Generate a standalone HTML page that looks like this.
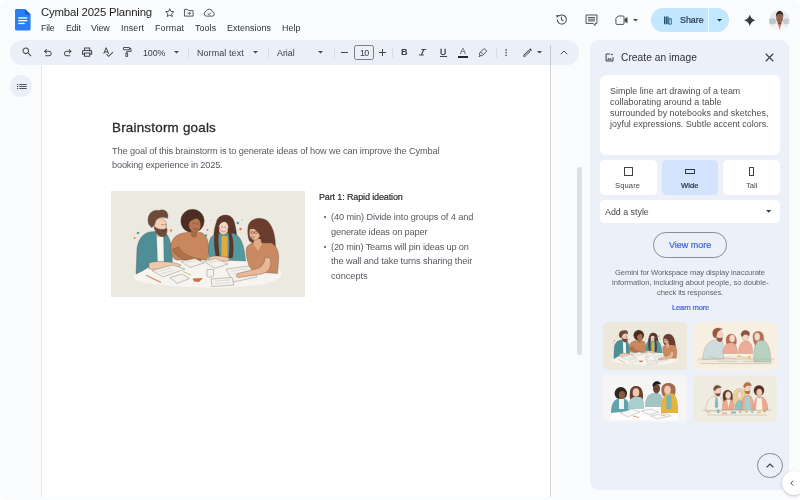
<!DOCTYPE html>
<html lang="en">
<head>
<meta charset="utf-8">
<title>Cymbal 2025 Planning</title>
<style>
*{box-sizing:border-box;margin:0;padding:0}
html,body{width:800px;height:500px;overflow:hidden}
html{background:#fff}
body{border-radius:7px;background:#f9fbfd;font-family:"Liberation Sans",sans-serif;color:#1f1f1f;position:relative}
.abs{position:absolute}
svg{position:absolute;overflow:visible}
.t{position:absolute;white-space:nowrap;line-height:1;will-change:transform}
#toolbar{left:10px;top:40px;width:569px;height:24.6px;border-radius:12.3px;background:#ebeff8}
.sep{position:absolute;width:1px;height:10px;top:47.6px;background:#d9dde5}
#docpage{left:40.5px;top:64.6px;width:510.6px;height:432.4px;background:#fff;border-left:1px solid #e4e6ea;border-right:1px solid #d3d5d9}
#panel{left:590.4px;top:40px;width:198.2px;height:449.5px;border-radius:9px;background:#ecf0f9}
.card{position:absolute;background:#fff;border-radius:6px}
.ic{stroke:#444746;fill:none;stroke-width:1.9;stroke-linecap:butt;stroke-linejoin:miter}
.fi{fill:#444746}
.thumb{position:absolute;width:84.4px;height:47.4px;border-radius:5px;overflow:hidden}
.thumb svg{left:0;top:0}
</style>
</head>
<body>
<!-- docs logo -->
<svg style="left:15px;top:9.3px" width="15.6" height="21.4" viewBox="0 0 15.6 21.4">
  <path d="M1.5 0H10L15.6 5.6V19.9Q15.6 21.4 14.1 21.4H1.5Q0 21.4 0 19.9V1.5Q0 0 1.5 0Z" fill="#2b7ef7"/>
  <path d="M10 0L15.6 5.6H11.2Q10 5.6 10 4.4Z" fill="#1659c7"/>
  <rect x="3.3" y="8.3" width="9" height="1.3" fill="#fff"/>
  <rect x="3.3" y="11" width="9" height="1.3" fill="#fff"/>
  <rect x="3.3" y="13.8" width="6.4" height="1.3" fill="#fff"/>
</svg>
<!-- title icons -->
<svg style="left:163.6px;top:6.7px" width="11.5" height="11.5" viewBox="0 0 24 24"><path class="ic" d="M12 3.6l2.5 5.6 6.1.6-4.6 4.1 1.3 6L12 16.8 6.7 19.9l1.3-6-4.6-4.1 6.1-.6z"/></svg>
<svg style="left:183px;top:6.5px" width="11.5" height="11.5" viewBox="0 0 24 24"><path class="ic" d="M3 5h6.5l2 2.5H21V19H3z"/><path class="ic" d="M9.5 13.2h6M13.2 10.5l2.6 2.7-2.6 2.7" stroke-width="1.7"/></svg>
<svg style="left:202.5px;top:6.5px" width="12.5" height="11.5" viewBox="0 0 26 24"><path class="ic" d="M7 19a5 5 0 0 1-.6-9.9A7 7 0 0 1 19.8 10 4.6 4.6 0 0 1 20 19z"/><path class="ic" d="M9.6 13.6l2.6 2.6 4.4-4.6" stroke-width="1.7"/></svg>

<!-- header right icons -->
<svg style="left:555.1px;top:13.3px" width="13" height="13" viewBox="0 0 24 24"><path class="ic" d="M4.2 12a8.4 8.4 0 1 0 2.6-6" stroke-width="2"/><path class="fi" d="M2.2 3.6l5.8.6-4.6 5z"/><path class="ic" d="M12 7v5.4l3.8 2.6" stroke-width="2"/></svg>
<svg style="left:585.4px;top:13.6px" width="13" height="12.4" viewBox="0 0 26 25"><path class="ic" d="M2 2h22v17h-3.6v4.2L16 19H2z" stroke-width="2.1"/><path class="ic" d="M6 7h14M6 10.5h14M6 14h14" stroke-width="1.6"/></svg>
<svg style="left:614.6px;top:14.8px" width="13.6" height="10.4" viewBox="0 0 27 21"><path class="ic" d="M6 2h10a2 2 0 0 1 2 2v13a2 2 0 0 1-2 2H3.600a2 2 0 0 1-2-2V6.500z" stroke-width="2.1"/><path class="fi" d="M19 8.200l6-4.200v13l-6-4.200z"/></svg>
<svg style="left:633.2px;top:18.6px" width="5" height="2.6" viewBox="0 0 10 5"><path class="fi" d="M0 0h10L5 5z"/></svg>
<!-- share button -->
<div class="abs" style="left:651.4px;top:7.5px;width:78px;height:24.4px;border-radius:12.2px;background:#c2e7ff"></div>
<div class="abs" style="left:708.4px;top:7.5px;width:1px;height:24.4px;background:#e6f4ff"></div>
<svg style="left:662.8px;top:15.6px" width="9.6" height="8.6" viewBox="0 0 20 21"><path d="M1 1h2.600v19H1zM5 1h2.600v19H5zM9 1h2.600v19H9z" fill="#0b3a5c"/><path d="M13 6.500h5.600V20H13z" fill="none" stroke="#0b3a5c" stroke-width="1.700"/></svg>
<svg style="left:716.6px;top:18.6px" width="5" height="2.6" viewBox="0 0 10 5"><path d="M0 0h10L5 5z" fill="#0b3a5c"/></svg>
<!-- gemini spark -->
<svg style="left:743.7px;top:13.5px" width="11.6" height="12.6" viewBox="0 0 24 24"><path d="M12 0Q14.600 9.400 24 12 14.600 14.600 12 24 9.400 14.600 0 12 9.400 9.400 12 0z" fill="#3a3c40"/></svg>
<!-- avatar -->
<svg style="left:769px;top:10px" width="20.4" height="20.4" viewBox="0 0 40 40">
  <defs><clipPath id="av"><circle cx="20" cy="20" r="20"/></clipPath></defs>
  <g clip-path="url(#av)">
    <rect width="40" height="40" fill="#e7eaec"/>
    <ellipse cx="6" cy="22" rx="8" ry="6" fill="#bcc5c8"/>
    <ellipse cx="34" cy="22" rx="7" ry="6" fill="#c6cdd0"/>
    <path d="M4 40C6 31 12 28 20.500 27.500s14 3.500 16 12.500z" fill="#f6f5f3"/>
    <path d="M17.500 26l3.300 13 3.300-13z" fill="#dd6f55"/>
    <rect x="17.300" y="20" width="7" height="8" fill="#7d4a34"/>
    <ellipse cx="20.800" cy="15.500" rx="6.600" ry="9" fill="#93604a"/>
    <path d="M13.600 14C13 5 18 1.800 21 1.800s8 3 7 12.200C26.500 8.500 24 7.500 20.800 7.500s-5.400 1.500-7.200 6.500z" fill="#2a1c18"/>
  </g>
</svg>

<!-- toolbar -->
<div class="abs" id="toolbar"></div>
<div class="sep" style="left:188px"></div>
<div class="sep" style="left:268px"></div>
<div class="sep" style="left:334.4px"></div>
<div class="sep" style="left:392.2px"></div>
<div class="sep" style="left:495.6px"></div>
<!-- search -->
<svg style="left:21.3px;top:46.3px" width="12.2" height="12.2" viewBox="0 0 24 24"><path class="fi" d="M15.500 14h-.79l-.28-.27C15.410 12.590 16 11.110 16 9.500 16 5.910 13.090 3 9.500 3S3 5.910 3 9.500 5.910 16 9.500 16c1.610 0 3.090-.59 4.230-1.570l.27.280v.79l5 4.990L20.490 19l-4.990-5zm-6 0C7.010 14 5 11.990 5 9.500S7.010 5 9.500 5 14 7.010 14 9.500 11.990 14 9.500 14z"/></svg>
<!-- undo -->
<svg style="left:41.8px;top:46.9px" width="11.6" height="11.6" viewBox="0 0 24 24"><path class="fi" d="M7 19v-2h7.100q1.575 0 2.738-1T18 13.500q0-1.500-1.162-2.500T14.100 10H7.800l2.600 2.600L9 14 4 9l5-5 1.400 1.400L7.800 8h6.300q2.425 0 4.163 1.575T20 13.500q0 2.350-1.737 3.925T14.100 19z"/></svg>
<!-- redo -->
<svg style="left:61.8px;top:46.9px" width="11.6" height="11.6" viewBox="0 0 24 24"><path class="fi" d="M9.900 19q-2.425 0-4.163-1.575T4 13.500q0-2.350 1.737-3.925T9.900 8h6.300l-2.600-2.600L15 4l5 5-5 5-1.400-1.400 2.600-2.600H9.900q-1.575 0-2.738 1T6 13.500Q6 15 7.162 16T9.900 17H17v2z"/></svg>
<!-- print -->
<svg style="left:81.4px;top:46.3px" width="12.2" height="12.2" viewBox="0 0 24 24"><path class="fi" d="M19 8h-1V3H6v5H5c-1.660 0-3 1.340-3 3v6h4v4h12v-4h4v-6c0-1.660-1.340-3-3-3zM8 5h8v3H8V5zm8 14H8v-4h8v4zm4-4h-2v-2H6v2H4v-4c0-.55.45-1 1-1h14c.55 0 1 .45 1 1v4z"/><circle class="fi" cx="18" cy="11.500" r="1"/></svg>
<!-- spellcheck -->
<svg style="left:101.6px;top:46.2px" width="11.8" height="11.8" viewBox="0 0 24 24"><path class="fi" d="M12.450 16h2.090L9.430 3H7.570L2.460 16h2.090l1.120-3h5.640l1.140 3zm-6.020-5L8.500 5.480 10.570 11H6.430zm15.160.59l-8.090 8.090L9.830 16l-1.410 1.410 5.090 5.090L23 13l-1.410-1.410z"/></svg>
<!-- paint format -->
<svg style="left:121.2px;top:46.1px" width="12" height="12" viewBox="0 0 24 24"><path class="ic" d="M5 3h12v4.500H5z" stroke-width="1.900"/><path class="ic" d="M17 5.200h3v5.600h-8.500v3" stroke-width="1.900"/><path class="ic" d="M9.800 14h3.400v7H9.800z" stroke-width="1.900"/></svg>
<!-- dropdown arrows -->
<svg style="left:174.300px;top:51.1px" width="5" height="2.600" viewBox="0 0 10 5"><path class="fi" d="M0 0h10L5 5z"/></svg>
<svg style="left:252.500px;top:51.1px" width="5" height="2.600" viewBox="0 0 10 5"><path class="fi" d="M0 0h10L5 5z"/></svg>
<svg style="left:318.300px;top:51.1px" width="5" height="2.600" viewBox="0 0 10 5"><path class="fi" d="M0 0h10L5 5z"/></svg>
<svg style="left:537.300px;top:51.1px" width="5" height="2.600" viewBox="0 0 10 5"><path class="fi" d="M0 0h10L5 5z"/></svg>
<!-- minus / size / plus -->
<div class="abs" style="left:341px;top:52.100px;width:7.400px;height:1.100px;background:#444746"></div>
<div class="abs" style="left:353.600px;top:45.400px;width:20px;height:14.200px;border:.8px solid #7a7d83;border-radius:2.500px"></div>
<div class="abs" style="left:378.700px;top:52.100px;width:7.400px;height:1.100px;background:#444746"></div>
<div class="abs" style="left:381.850px;top:48.950px;width:1.100px;height:7.400px;background:#444746"></div>
<!-- B I U A -->
<div class="t" style="left:401.200px;top:47.900px;font-size:9.200px;font-weight:700;color:#3c4043">B</div>
<svg style="left:419.400px;top:49.200px" width="7.200" height="6.600" viewBox="0 0 12 11"><path d="M4 0h8v1.800H8.800L5.400 9.200H8V11H0V9.200h3.200L6.600 1.800H4z" fill="#444746"/></svg>
<div class="t" style="left:440px;top:48px;font-size:8.600px;font-weight:400;color:#3c4043;-webkit-text-stroke:.3px #3c4043">U</div>
<div class="abs" style="left:439.700px;top:56.300px;width:7px;height:1px;background:#444746"></div>
<div class="t" style="left:460.100px;top:47.300px;font-size:8.600px;color:#3c4043">A</div>
<div class="abs" style="left:458.200px;top:56.300px;width:9.800px;height:1.700px;background:#26282b"></div>
<!-- highlighter pen -->
<svg style="left:477.400px;top:46.700px" width="11.250" height="11.250" viewBox="0 0 24 24"><path class="ic" d="M15.200 3.200l5.600 5.600-9.600 9.600H5.600v-5.600z" stroke-width="2" transform="rotate(0)"/><path class="ic" d="M8.200 10.800l5 5" stroke-width="1.600"/><path class="fi" d="M3 21.500l2-2.600 2.600 2.600z"/></svg>
<!-- more vert -->
<svg style="left:504.900px;top:48.700px" width="2.200" height="7.200" viewBox="0 0 4 13"><circle class="fi" cx="2" cy="1.600" r="1.500"/><circle class="fi" cx="2" cy="6.500" r="1.500"/><circle class="fi" cx="2" cy="11.400" r="1.500"/></svg>
<!-- pencil -->
<svg style="left:521.500px;top:46.700px" width="11.250" height="11.250" viewBox="0 0 24 24"><path class="fi" d="M3 17.250V21h3.750L17.810 9.940l-3.750-3.750L3 17.250zM20.710 7.040a.996.996 0 0 0 0-1.410l-2.340-2.340a.996.996 0 0 0-1.410 0l-1.830 1.830 3.750 3.750 1.830-1.830z"/><path d="M5.200 17.900l9-9 1.400 1.400-9 9H5.200z" fill="#ebeff8"/></svg>
<!-- collapse chevron -->
<svg style="left:560.200px;top:50.300px" width="8" height="5" viewBox="0 0 16 10"><path d="M1.500 8.500L8 2l6.500 6.500" fill="none" stroke="#444746" stroke-width="1.900"/></svg>


<!-- left rail outline button -->
<div class="abs" style="left:10.4px;top:75.2px;width:21.8px;height:21.8px;border-radius:50%;background:#ebeff7"></div>
<svg style="left:16.500px;top:84px" width="10" height="5" viewBox="0 0 10 5"><path d="M0 0h1.200v1H0zM2.300 0H9.700v1H2.300zM0 2h1.200v1H0zM2.300 2H9.700v1H2.300zM0 4h1.200v1H0zM2.300 4H9.700v1H2.300z" fill="#50545a"/></svg>

<!-- page -->
<div class="abs" id="docpage"></div>
<div class="abs" style="left:550.1px;top:45.4px;width:1px;height:20px;background:#c6c9ce"></div>
<div class="abs" style="left:577.2px;top:166.5px;width:4.6px;height:188.5px;border-radius:2.3px;background:#dcdee2"></div>
<!-- doc image -->
<div class="abs" style="left:111px;top:191px;width:194px;height:106px;background:#ece9e0;overflow:hidden">
<svg style="left:0;top:0" width="194" height="106" viewBox="0 0 194 106"><g>
<!-- accent dots -->
<circle cx="27" cy="42" r="1.300" fill="#4f9ea3"/><circle cx="23.700" cy="47" r="1" fill="#e08a4f"/><circle cx="60" cy="39.500" r="1.200" fill="#e08a4f"/><circle cx="95" cy="44.500" r="1.200" fill="#4f9ea3"/><circle cx="126.800" cy="32" r="1.300" fill="#4f9ea3"/><circle cx="129.500" cy="38" r="1.200" fill="#e0694f"/><circle cx="96.500" cy="39" r="1" fill="#e08a4f"/><circle cx="123.500" cy="36.500" r="1" fill="#4f9ea3"/><circle cx="30" cy="51" r=".8" fill="#e08a4f"/><circle cx="92" cy="31" r=".7" fill="#e9b9a0"/><circle cx="100" cy="29" r=".7" fill="#e9b9a0"/><circle cx="131" cy="29" r=".7" fill="#8fc3c6"/>
<!-- table -->
<path d="M22 86C28 75 52 68 97 68s64 5 73 13c3 4-4 9-17 12-20 4-60 5-90 2-22-2-38-3-41-9z" fill="#f6f4ee"/>
<g stroke="#5e4a40" stroke-width=".35" stroke-linejoin="round">
<!-- man -->
<path d="M37 41.500C30 44 27 50 26 58L25 83C30 81 36 77 41 74L61 73C62 64 61 52 56.500 44 52 41 44 39.500 37 41.500z" fill="#4e8f97"/>
<path d="M45.500 43L52.500 45.500 53 71 46.500 71z" fill="#f6f4ef" stroke-width=".2"/>
<path d="M38 72C46 69.500 57 70.500 66 72.500L70 74 66.500 77C58 77.500 46 79 38 78z" fill="#f0c8ad"/>
<path d="M46 40h6v6h-6z" fill="#e9bda0" stroke="none"/>
<ellipse cx="49.500" cy="34.500" rx="6" ry="7.500" fill="#f3cfb6"/>
<path d="M37.500 33C35 23 42 18 48 19.500 54 17 58.500 22 56.500 27.500 52 25 46.500 26 44.500 30 43.500 34 42.500 36 40.500 36.500z" fill="#6e4a3a"/>
<path d="M43 35.500C44 42 48 46.500 53 45.500 56 44.500 56.500 40 55.800 37 52 39.500 47 38.500 43 35.500z" fill="#704a38"/>
<!-- woman 2 -->
<circle cx="81.500" cy="30" r="11.700" fill="#4b2d22"/>
<path d="M60 53C62 45 69 41.500 77 41.500L90 41.500C96 43.500 98.500 52 97.500 62L96 69 65 69C60 65 59 59 60 53z" fill="#c9875e"/>
<path d="M80 40h6v5l-3 2-3-2z" fill="#a86a45" stroke="none"/>
<ellipse cx="83.800" cy="34" rx="6" ry="7.200" fill="#b7754f"/>
<path d="M75 30C76 24 84 22 90 27 86 27 80 28 77 33z" fill="#4b2d22" stroke="none"/>
<path d="M61.500 58C63 66 76 70.500 88 72.500L90 68.500C80 66.500 70 62.500 68 56z" fill="#b27049"/>
<!-- woman 3 -->
<path d="M105.500 31C107 22.500 120 21.500 123 30 126 40 127.500 55 124.500 65L104 65C101.500 52 102.500 38 105.500 31z" fill="#5b342a"/>
<path d="M99.500 47C103 42.500 108 41.500 112 42L120 42C128 42.500 133 50 134.500 70L98 68.500C97 60 97.500 52 99.500 47z" fill="#529aa0"/>
<path d="M110.500 45L116.500 45 116.500 67 110.500 67z" fill="#e3ab3e" stroke="none"/>
<ellipse cx="112.500" cy="37" rx="5" ry="6.700" fill="#f5d6c1"/>
<path d="M104.500 36C102 48 103 60 105.500 67L109 67C107 56 107 46 108.500 36z" fill="#5b342a" stroke="none"/>
<path d="M118.500 36C122.500 46 123.500 58 121.500 67L117.500 67C119 56 118.500 46 116.500 38z" fill="#5b342a" stroke="none"/>
<path d="M106 34C107 27 116 26 119.500 32 115 30 110 30 108 35z" fill="#5b342a" stroke="none"/>
<path d="M98 66C104 64 112 65 118 67L118 70 98 70z" fill="#f0c8ad"/>
<!-- woman 4 -->
<path d="M137 36C138 27 150 25 156.500 30 162.500 36 164.500 46 164.500 56L150 57 138.500 50C136.500 46 136.500 40 137 36z" fill="#6b3d2f"/>
<path d="M135.500 57C137.500 52.500 144 50.500 150 52L160 52C166 54 168.500 62 167.500 70L166.500 82.500 140.500 80.500C136 72 134.500 62 135.500 57z" fill="#c98a62"/>
<path d="M143 48L149.500 48 151 53 147 60 142.500 53z" fill="#e3aa86" stroke="none"/>
<ellipse cx="143.800" cy="42" rx="5.600" ry="7.200" fill="#eab794"/>
<path d="M138 38C139 31 149 29 153 35 155 41 154 47 151 52 150 45 147 40 143 38z" fill="#6b3d2f" stroke="none"/>
</g>
<!-- face details -->
<g fill="none" stroke="#4a352c" stroke-width=".45" stroke-linecap="round">
<path d="M51 33.500h1.200M54 33.800h1M50.500 39.500c1.500 1 3 1 4 .2"/>
<path d="M82 32.500c.6-.5 1.300-.5 1.800 0M86 33c.5-.4 1-.4 1.500 0M82.500 37.500c1.500 1.200 3.200 1.200 4.300 0"/>
<path d="M110.500 36c.5-.5 1-.5 1.500 0M113.500 36.300c.5-.4 1-.4 1.400 0M110.500 40c1.200 1.300 3 1.300 4 0"/>
<path d="M140 41.500a1.300 1.300 0 1 0 2.600 0a1.300 1.300 0 1 0-2.600 0M143.500 41.500a1.300 1.300 0 1 0 2.600 0a1.300 1.300 0 1 0-2.600 0M140.500 46c1 .9 2.300.9 3.200 0"/>
</g>
<circle cx="141.500" cy="44.500" r=".9" fill="#e58a70" opacity=".7"/><circle cx="110" cy="39" r=".9" fill="#ee9a84" opacity=".7"/>
<!-- notebooks, papers -->
<g fill="#f3f1ea" stroke="#85827b" stroke-width=".45" stroke-linejoin="round">
<path d="M41 79.500L62 74 74 78 52 86z"/>
<path d="M59 86.500L71 83 78.500 87.500 66 92.500z"/>
<path d="M70 70.500L84 67.500 93 72 79 76.500z"/>
<path d="M93 70.500L105 67.500 117 73 104 77.500z"/>
<path d="M115 78L138 75 146 86 122 91z"/>
<path d="M100 88L121 86.500 123 94 101 95.500z"/>
<path d="M96 78.500h6.500v5.500a2 2 0 0 1-2 2h-2.500a2 2 0 0 1-2-2z"/>
</g>
<g fill="none" stroke="#a9a59b" stroke-width=".3"><path d="M47 80.500l14-3.500M50 82.500l14-3.500M120 80l17-2.300M122 83l17-2.300M104 90l15-1M104 92.500l15-1M98 71.500l10-2M75 71.500l10-2"/></g>
<path d="M35 84.200L50 91.500" stroke="#d9835a" stroke-width="1.100"/>
<path d="M81.500 87.500L92 87 88 91 83 90.500z" fill="#c9714a"/>
<path d="M72 80.500l8 3.500" stroke="#c9a06a" stroke-width=".7"/>
<!-- woman 4 arm over notebook -->
<path d="M159 67C161.500 75 158 81 151 83L128 86.500C125 87 124.500 83.500 127 82.500L148 77C152 75 154 70.500 154 66z" fill="#eab794" stroke="#5e4a40" stroke-width=".35"/>
</g>
</svg>
</div>
<!-- bullets -->
<div class="abs" style="left:323.8px;top:216.4px;width:1.8px;height:1.8px;border-radius:50%;background:#50535a"></div>
<div class="abs" style="left:323.8px;top:245.8px;width:1.8px;height:1.8px;border-radius:50%;background:#50535a"></div>

<!-- panel -->
<div class="abs" id="panel"></div>
<svg style="left:605px;top:53.2px" width="9" height="9" viewBox="0 0 18 18"><path d="M10 2H2.200v14H16V8" fill="none" stroke="#3c4043" stroke-width="2"/><path d="M4 13.500l3-4 2.200 2.600 1.800-2 3 3.400z" fill="#444746"/><path d="M14 0c.2 2 1 2.800 3 3-2 .2-2.800 1-3 3-.2-2-1-2.800-3-3 2-.2 2.800-1 3-3z" fill="#444746"/></svg>
<svg style="left:765.4px;top:53px" width="9" height="9" viewBox="0 0 18 18"><path d="M1.500 1.500l15 15M16.500 1.500l-15 15" stroke="#3c4043" stroke-width="2.300" fill="none"/></svg>
<div class="card" style="left:599.8px;top:75px;width:180px;height:80px"></div>
<div class="card" style="left:599.8px;top:160.2px;width:57.2px;height:34.7px;border-radius:4.500px"></div>
<div class="card" style="left:661.6px;top:160.2px;width:56.6px;height:34.7px;border-radius:4.500px;background:#d3e3fd"></div>
<div class="card" style="left:722.8px;top:160.2px;width:57px;height:34.7px;border-radius:4.500px"></div>
<div class="abs" style="left:623.6px;top:166.800px;width:9.6px;height:9.400px;border:1.100px solid #3c4043;border-radius:.6px"></div>
<div class="abs" style="left:685.2px;top:168.800px;width:9.6px;height:5.600px;border:1.100px solid #2a3550;border-radius:.6px"></div>
<div class="abs" style="left:748.9px;top:166.800px;width:5.600px;height:9.400px;border:1.100px solid #3c4043;border-radius:.6px"></div>
<div class="card" style="left:599.8px;top:200.3px;width:180px;height:22.4px;border-radius:4.500px"></div>
<svg style="left:765.6px;top:210.3px" width="5.400" height="2.800" viewBox="0 0 10 5"><path d="M0 0h10L5 5z" fill="#3c4043"/></svg>
<div class="abs" style="left:653px;top:232px;width:74px;height:25.600px;border-radius:12.800px;border:1px solid #8b8e95"></div>
<!-- thumbs -->
<div class="thumb" style="left:602.8px;top:322.2px;background:#ece8dc"><svg width="84.400" height="47.400" viewBox="1 0 190 107"><g>
<!-- accent dots -->
<circle cx="27" cy="42" r="1.300" fill="#4f9ea3"/><circle cx="23.700" cy="47" r="1" fill="#e08a4f"/><circle cx="60" cy="39.500" r="1.200" fill="#e08a4f"/><circle cx="95" cy="44.500" r="1.200" fill="#4f9ea3"/><circle cx="126.800" cy="32" r="1.300" fill="#4f9ea3"/><circle cx="129.500" cy="38" r="1.200" fill="#e0694f"/><circle cx="96.500" cy="39" r="1" fill="#e08a4f"/><circle cx="123.500" cy="36.500" r="1" fill="#4f9ea3"/><circle cx="30" cy="51" r=".8" fill="#e08a4f"/><circle cx="92" cy="31" r=".7" fill="#e9b9a0"/><circle cx="100" cy="29" r=".7" fill="#e9b9a0"/><circle cx="131" cy="29" r=".7" fill="#8fc3c6"/>
<!-- table -->
<path d="M22 86C28 75 52 68 97 68s64 5 73 13c3 4-4 9-17 12-20 4-60 5-90 2-22-2-38-3-41-9z" fill="#f6f4ee"/>
<g stroke="#5e4a40" stroke-width=".35" stroke-linejoin="round">
<!-- man -->
<path d="M37 41.500C30 44 27 50 26 58L25 83C30 81 36 77 41 74L61 73C62 64 61 52 56.500 44 52 41 44 39.500 37 41.500z" fill="#4e8f97"/>
<path d="M45.500 43L52.500 45.500 53 71 46.500 71z" fill="#f6f4ef" stroke-width=".2"/>
<path d="M38 72C46 69.500 57 70.500 66 72.500L70 74 66.500 77C58 77.500 46 79 38 78z" fill="#f0c8ad"/>
<path d="M46 40h6v6h-6z" fill="#e9bda0" stroke="none"/>
<ellipse cx="49.500" cy="34.500" rx="6" ry="7.500" fill="#f3cfb6"/>
<path d="M37.500 33C35 23 42 18 48 19.500 54 17 58.500 22 56.500 27.500 52 25 46.500 26 44.500 30 43.500 34 42.500 36 40.500 36.500z" fill="#6e4a3a"/>
<path d="M43 35.500C44 42 48 46.500 53 45.500 56 44.500 56.500 40 55.800 37 52 39.500 47 38.500 43 35.500z" fill="#704a38"/>
<!-- woman 2 -->
<circle cx="81.500" cy="30" r="11.700" fill="#4b2d22"/>
<path d="M60 53C62 45 69 41.500 77 41.500L90 41.500C96 43.500 98.500 52 97.500 62L96 69 65 69C60 65 59 59 60 53z" fill="#c9875e"/>
<path d="M80 40h6v5l-3 2-3-2z" fill="#a86a45" stroke="none"/>
<ellipse cx="83.800" cy="34" rx="6" ry="7.200" fill="#b7754f"/>
<path d="M75 30C76 24 84 22 90 27 86 27 80 28 77 33z" fill="#4b2d22" stroke="none"/>
<path d="M61.500 58C63 66 76 70.500 88 72.500L90 68.500C80 66.500 70 62.500 68 56z" fill="#b27049"/>
<!-- woman 3 -->
<path d="M105.500 31C107 22.500 120 21.500 123 30 126 40 127.500 55 124.500 65L104 65C101.500 52 102.500 38 105.500 31z" fill="#5b342a"/>
<path d="M99.500 47C103 42.500 108 41.500 112 42L120 42C128 42.500 133 50 134.500 70L98 68.500C97 60 97.500 52 99.500 47z" fill="#529aa0"/>
<path d="M110.500 45L116.500 45 116.500 67 110.500 67z" fill="#e3ab3e" stroke="none"/>
<ellipse cx="112.500" cy="37" rx="5" ry="6.700" fill="#f5d6c1"/>
<path d="M104.500 36C102 48 103 60 105.500 67L109 67C107 56 107 46 108.500 36z" fill="#5b342a" stroke="none"/>
<path d="M118.500 36C122.500 46 123.500 58 121.500 67L117.500 67C119 56 118.500 46 116.500 38z" fill="#5b342a" stroke="none"/>
<path d="M106 34C107 27 116 26 119.500 32 115 30 110 30 108 35z" fill="#5b342a" stroke="none"/>
<path d="M98 66C104 64 112 65 118 67L118 70 98 70z" fill="#f0c8ad"/>
<!-- woman 4 -->
<path d="M137 36C138 27 150 25 156.500 30 162.500 36 164.500 46 164.500 56L150 57 138.500 50C136.500 46 136.500 40 137 36z" fill="#6b3d2f"/>
<path d="M135.500 57C137.500 52.500 144 50.500 150 52L160 52C166 54 168.500 62 167.500 70L166.500 82.500 140.500 80.500C136 72 134.500 62 135.500 57z" fill="#c98a62"/>
<path d="M143 48L149.500 48 151 53 147 60 142.500 53z" fill="#e3aa86" stroke="none"/>
<ellipse cx="143.800" cy="42" rx="5.600" ry="7.200" fill="#eab794"/>
<path d="M138 38C139 31 149 29 153 35 155 41 154 47 151 52 150 45 147 40 143 38z" fill="#6b3d2f" stroke="none"/>
</g>
<!-- face details -->
<g fill="none" stroke="#4a352c" stroke-width=".45" stroke-linecap="round">
<path d="M51 33.500h1.200M54 33.800h1M50.500 39.500c1.500 1 3 1 4 .2"/>
<path d="M82 32.500c.6-.5 1.300-.5 1.800 0M86 33c.5-.4 1-.4 1.500 0M82.500 37.500c1.500 1.200 3.200 1.200 4.300 0"/>
<path d="M110.500 36c.5-.5 1-.5 1.500 0M113.500 36.300c.5-.4 1-.4 1.400 0M110.500 40c1.200 1.300 3 1.300 4 0"/>
<path d="M140 41.500a1.300 1.300 0 1 0 2.600 0a1.300 1.300 0 1 0-2.600 0M143.500 41.500a1.300 1.300 0 1 0 2.600 0a1.300 1.300 0 1 0-2.600 0M140.500 46c1 .9 2.300.9 3.200 0"/>
</g>
<circle cx="141.500" cy="44.500" r=".9" fill="#e58a70" opacity=".7"/><circle cx="110" cy="39" r=".9" fill="#ee9a84" opacity=".7"/>
<!-- notebooks, papers -->
<g fill="#f3f1ea" stroke="#85827b" stroke-width=".45" stroke-linejoin="round">
<path d="M41 79.500L62 74 74 78 52 86z"/>
<path d="M59 86.500L71 83 78.500 87.500 66 92.500z"/>
<path d="M70 70.500L84 67.500 93 72 79 76.500z"/>
<path d="M93 70.500L105 67.500 117 73 104 77.500z"/>
<path d="M115 78L138 75 146 86 122 91z"/>
<path d="M100 88L121 86.500 123 94 101 95.500z"/>
<path d="M96 78.500h6.500v5.500a2 2 0 0 1-2 2h-2.500a2 2 0 0 1-2-2z"/>
</g>
<g fill="none" stroke="#a9a59b" stroke-width=".3"><path d="M47 80.500l14-3.500M50 82.500l14-3.500M120 80l17-2.300M122 83l17-2.300M104 90l15-1M104 92.500l15-1M98 71.500l10-2M75 71.500l10-2"/></g>
<path d="M35 84.200L50 91.500" stroke="#d9835a" stroke-width="1.100"/>
<path d="M81.500 87.500L92 87 88 91 83 90.500z" fill="#c9714a"/>
<path d="M72 80.500l8 3.500" stroke="#c9a06a" stroke-width=".7"/>
<!-- woman 4 arm over notebook -->
<path d="M159 67C161.500 75 158 81 151 83L128 86.500C125 87 124.500 83.500 127 82.500L148 77C152 75 154 70.500 154 66z" fill="#eab794" stroke="#5e4a40" stroke-width=".35"/>
</g>
</svg></div>
<div class="thumb" style="left:693px;top:322.2px;background:#f7efe1"><svg width="84.400" height="47.400" viewBox="0 0 84.400 47.400"><g>
<path d="M4 36.500C20 33.500 64 33.500 82 36.500L80 42.500 6 42.500z" fill="#f0e8da"/>
<g stroke="#9a8476" stroke-width=".3" stroke-linejoin="round">
<!-- man -->
<path d="M9.800 37.500C10 26.500 14 19.500 22 18L30 20 30.500 37z" fill="#cfdcde"/>
<ellipse cx="26.300" cy="13.800" rx="3.500" ry="5.200" fill="#f3d3be"/>
<path d="M19.800 13C18.500 6.500 24 4.500 29.500 7 27 8 24.300 9 23.800 13 23.300 16 21.500 16.500 20.500 15z" fill="#9a563a"/>
<path d="M23 14.500C23.500 19 26 20.500 28.500 19.500 29.500 18 29.500 16.500 29.200 15.500 27 16.500 24.500 16.300 23 14.500z" fill="#9a563a"/>
<!-- woman 2 -->
<path d="M33.300 16C34.500 10.500 42 10.500 43.200 16.500 43.800 19.500 43.500 21 43 22.500L33.800 22.500C33 20.500 32.800 18 33.300 16z" fill="#b86a4e"/>
<path d="M30 31.500C30.300 25 32.500 21.500 36 21L40 21C43 22 44.500 26 44.500 31.500z" fill="#eeab97"/>
<ellipse cx="39.200" cy="16.500" rx="2.900" ry="3.800" fill="#f6d8c6"/>
<!-- person 3 -->
<path d="M45.500 31.500C45.500 24 48 19.800 51.500 19.300L55 19.300C58 20.300 59.800 24.500 59.800 31.500z" fill="#eeab97"/>
<ellipse cx="52.300" cy="14.800" rx="3.100" ry="4" fill="#f6d8c6"/>
<path d="M48 13.500C47.500 8 54 6.800 56.500 10.500 56.800 12 56.500 13.300 56 14.300 54.500 12 51.500 11.300 49 15z" fill="#8a5440"/>
<!-- woman 4 -->
<path d="M60 13C61.500 8 69 8 70.500 13.500 71.300 18 70.800 22 69.800 25L62.500 24C60.500 20.500 59.500 16.500 60 13z" fill="#b86e50"/>
<path d="M61 40C60 28.500 62 20.500 66 18.500L71 18.500C75.500 21 77.800 28.500 77.800 40z" fill="#b7d2c2"/>
<ellipse cx="64.200" cy="14.700" rx="2.900" ry="4" fill="#f6d8c6"/>
</g>
<!-- table items -->
<g fill="none" stroke="#b5a791" stroke-width=".4"><path d="M5 37h76M8 41.500h70M16 34.500l10 2.500M30 35.500l14 1.500M46 34.500l12 2.500M24 39l20 .5M50 39.500l16-.5"/></g>
<rect x="44" y="33.500" width="3.400" height="1.600" fill="#efbf55"/><rect x="55" y="34" width="3" height="1.600" fill="#efbf55"/>
</g>
</svg></div>
<div class="thumb" style="left:602.8px;top:374.8px;background:#f5f5f5"><svg width="84.400" height="47.400" viewBox="0 0 84.400 47.400"><g>
<path d="M6 37C20 31 60 30 76 35L74 45 8 45z" fill="#fdfdfd"/>
<!-- woman 1 -->
<circle cx="17.800" cy="18.300" r="6.200" fill="#2e2422"/>
<path d="M8 38C8 29 11 24 16 23.500L21 23.500C25 24.500 26.500 29 26.500 36z" fill="#5fa3ad"/>
<path d="M16 24h5v10h-5z" fill="#f4f2ee"/>
<ellipse cx="19" cy="20" rx="3.200" ry="4" fill="#8a5a40"/>
<!-- woman 2 -->
<path d="M27 17C27.500 9.500 38 9 39.500 16.500 40.500 21 40 24 39 26L28 26C26.500 23 26.500 20 27 17z" fill="#6a4030"/>
<path d="M25 34C25 26 28 22.500 31.500 22L37 22C40 23 41.500 27 41 34z" fill="#a7d0cf"/>
<ellipse cx="33" cy="17.500" rx="3.300" ry="4.300" fill="#f0c8b0"/>
<!-- man 3 -->
<path d="M42 32C42 23 45 18.500 50 18L55 18C59 19 60.500 24 60.500 32z" fill="#a4c4c4"/>
<ellipse cx="53.500" cy="13.500" rx="3.500" ry="5" fill="#6b4632"/>
<path d="M49.500 11C49.500 5.500 57 4.500 58 9.500 56 8.500 52 8.500 50.500 12z" fill="#1e1a1a"/>
<!-- woman 4 -->
<path d="M58.500 13C59.500 6.500 71 6 72.500 13 73 17 72 20 71 21.500L60 21C58.500 18.500 58 15.500 58.500 13z" fill="#a06c52"/>
<path d="M58 38C57.500 27 60 20 64 18.500L70 18.500C74 21 75.500 28 75 38z" fill="#e6b33c"/>
<path d="M63.500 20h5v14h-5z" fill="#79b5b5"/>
<ellipse cx="64.500" cy="15" rx="3.300" ry="4.300" fill="#f0c8b0"/>
<!-- papers -->
<g fill="#f7f7f5" stroke="#9a9894" stroke-width=".4"><path d="M17 38l12-4 8 3-12 5zM38 36l10-2 8 3-10 3zM48 41l14-3 6 3-14 3z"/></g>
<path d="M30 41l6 1.500" stroke="#e0853f" stroke-width=".8"/><path d="M58 40l5 1" stroke="#e0b03f" stroke-width=".8"/>
</g>
</svg></div>
<div class="thumb" style="left:693px;top:374.8px;background:#f1ece2"><svg width="84.400" height="47.400" viewBox="0 0 84.400 47.400"><g>
<g stroke="#8f7b6e" stroke-width=".3" stroke-linejoin="round">
<!-- man 1 -->
<path d="M12.500 36C13 27.500 16 22 21 21.500L26 21.500C29 22.500 30 27 30 36z" fill="#f1ede3"/>
<path d="M22.500 22.500l2 0 .8 9-1.800 2-1.800-2z" fill="#7fbcbb" stroke="none"/>
<ellipse cx="24.300" cy="16.500" rx="3.200" ry="4.500" fill="#f3d3be"/>
<path d="M20.500 15C20 9.500 27 8.500 28.500 13 26.500 12.500 23.500 12.500 22 16z" fill="#7a4c38"/>
<path d="M22 18c.5 2.500 2.500 3.500 4.500 3 .8-.8 1-2 .9-3-1.600.8-3.900.8-5.400 0z" fill="#7a4c38" stroke="none"/>
<!-- woman 2 -->
<path d="M30 19C31 13.500 38.500 13.500 39.500 19.500 40 23 39.500 25.500 39 27L31 27C30 24.500 29.500 21.500 30 19z" fill="#55352c"/>
<path d="M29.500 35C29.500 28 31.500 24.500 34.500 24L37 24C40 25 41 29 41 35z" fill="#eda98c"/>
<path d="M34 25l1.500 8 1.500-8z" fill="#f6efe6" stroke="none"/>
<ellipse cx="35.200" cy="20.200" rx="2.800" ry="3.800" fill="#f5d6c4"/>
<!-- woman 3 blonde -->
<path d="M41 18.500C42 12 51 12 52 19 52.500 25 52 29 51 32L42 32C41 28 40.500 22.500 41 18.500z" fill="#ecd596"/>
<path d="M42 35C42 29.500 44 26 46 25.500L48 25.500C50 26.500 51.500 30 51 35z" fill="#8cc4c2"/>
<ellipse cx="46.500" cy="20.500" rx="2.800" ry="4" fill="#f7dccb"/>
<!-- man 4 -->
<path d="M48.500 35C48.500 26 50.500 21 53.500 20.500L56.500 20.500C59.500 21.500 60.500 26 60.500 35z" fill="#eda98c"/>
<path d="M52 21.500h5l.8 13.500h-6.600z" fill="#a5d0cd" stroke="none"/>
<ellipse cx="54.200" cy="13.800" rx="3" ry="4.600" fill="#f3d3be"/>
<path d="M50.500 12C50.500 6 58 5.500 58.500 11 56.500 10 53 10 51.500 13z" fill="#c0703f"/>
<path d="M51.500 15.500C52 19 54 20 56.500 19 57.300 18 57.300 16.500 57 15.500 55.500 16.500 53 16.500 51.500 15.500z" fill="#c0703f" stroke="none"/>
<!-- person 5 -->
<circle cx="66" cy="15.500" r="5.200" fill="#5a2e28"/>
<path d="M60.500 35C60.500 27 62.500 22.500 65.500 22L69 22C72.500 23 74.500 28 75 35z" fill="#eda98c"/>
<path d="M64 23h4.500l1 12h-6.500z" fill="#f6f1e9" stroke="none"/>
<ellipse cx="66.300" cy="17.500" rx="2.900" ry="3.800" fill="#f0c8ae"/>
</g>
<!-- table -->
<g fill="none" stroke="#b3a996" stroke-width=".4"><path d="M9 35.300h70M14 40h60"/></g>
<rect x="14" y="36" width="3" height="1.800" fill="#f0cf6a"/><rect x="24" y="34.500" width="2.400" height="3.500" fill="#7fb8b8"/><rect x="29" y="37.500" width="5" height="1.600" fill="#f0b0a0"/><rect x="38" y="36.500" width="5" height="2" fill="#7fc0b8"/><rect x="46" y="35" width="2.600" height="3" fill="#f0b0a0"/><rect x="52" y="35.500" width="3" height="2" fill="#e8c04a"/><rect x="58" y="35" width="2.400" height="3" fill="#9ccbc9"/><rect x="64" y="36.500" width="4" height="1.800" fill="#f0cf6a"/><rect x="70" y="35.500" width="3" height="1.600" fill="#e8a04a"/>
</g>
</svg></div>
<!-- scroll-up button -->
<div class="abs" style="left:757.4px;top:452.8px;width:25.200px;height:25.200px;border-radius:50%;border:1px solid #85888f"></div>
<svg style="left:766px;top:463.2px" width="8" height="5" viewBox="0 0 16 10"><path d="M1.500 8.500L8 2l6.500 6.500" fill="none" stroke="#3c4043" stroke-width="2.400"/></svg>
<!-- side-panel toggle -->
<div class="abs" style="left:782px;top:470.8px;width:24px;height:24px;border-radius:50%;background:#fff;box-shadow:0 1px 3px rgba(60,64,67,.3)"></div>
<svg style="left:790.4px;top:479.6px" width="4" height="6.400" viewBox="0 0 8 13"><path d="M6.500 1.500L1.800 6.500l4.700 5" fill="none" stroke="#444746" stroke-width="2"/></svg>

<div class="t" style="left:41.20px;top:7.00px;font-size:11.4px;color:#1f1f1f;letter-spacing:-0.181px">Cymbal 2025 Planning</div>
<div class="t" style="left:41.20px;top:24.00px;font-size:8.9px;color:#303134;letter-spacing:-0.228px">File</div>
<div class="t" style="left:65.60px;top:24.00px;font-size:8.9px;color:#303134;letter-spacing:-0.124px">Edit</div>
<div class="t" style="left:91.40px;top:24.00px;font-size:8.9px;color:#303134;letter-spacing:-0.120px">View</div>
<div class="t" style="left:121.00px;top:24.00px;font-size:8.9px;color:#303134;letter-spacing:0.166px">Insert</div>
<div class="t" style="left:155.40px;top:24.00px;font-size:8.9px;color:#303134;letter-spacing:0.182px">Format</div>
<div class="t" style="left:194.80px;top:24.00px;font-size:8.9px;color:#303134;letter-spacing:0.096px">Tools</div>
<div class="t" style="left:226.80px;top:24.00px;font-size:8.9px;color:#303134;letter-spacing:0.058px">Extensions</div>
<div class="t" style="left:281.80px;top:24.00px;font-size:8.9px;color:#303134;letter-spacing:0.034px">Help</div>
<div class="t" style="left:142.60px;top:49.00px;font-size:8.9px;color:#3c4043;letter-spacing:-0.076px">100%</div>
<div class="t" style="left:197.00px;top:49.00px;font-size:8.9px;color:#3c4043;letter-spacing:0.130px">Normal text</div>
<div class="t" style="left:277.40px;top:49.00px;font-size:8.9px;color:#3c4043;letter-spacing:-0.033px">Arial</div>
<div class="t" style="left:359.80px;top:49.00px;font-size:8.9px;color:#3c4043;letter-spacing:-0.638px">10</div>
<div class="t" style="left:679.80px;top:16.00px;font-size:8.9px;color:#21384d;letter-spacing:-0.017px;-webkit-text-stroke:0.2px #21384d">Share</div>
<div class="t" style="left:111.80px;top:121.00px;font-size:13.4px;color:#2a2b2e;letter-spacing:0.220px;-webkit-text-stroke:0.3px #2a2b2e">Brainstorm goals</div>
<div class="t" style="left:111.80px;top:147.00px;font-size:9.2px;color:#565960;letter-spacing:-0.119px">The goal of this brainstorm is to generate ideas of how we can improve the Cymbal</div>
<div class="t" style="left:111.80px;top:161.00px;font-size:9.2px;color:#565960;letter-spacing:-0.164px">booking experience in 2025.</div>
<div class="t" style="left:318.60px;top:193.00px;font-size:9.0px;color:#2a2b2e;letter-spacing:-0.130px;-webkit-text-stroke:0.2px #2a2b2e">Part 1: Rapid ideation</div>
<div class="t" style="left:331.40px;top:213.00px;font-size:9.2px;color:#565960;letter-spacing:-0.093px">(40 min) Divide into groups of 4 and</div>
<div class="t" style="left:331.40px;top:228.00px;font-size:9.2px;color:#565960;letter-spacing:-0.144px">generate ideas on paper</div>
<div class="t" style="left:331.40px;top:243.00px;font-size:9.2px;color:#565960;letter-spacing:-0.161px">(20 min) Teams will pin ideas up on</div>
<div class="t" style="left:331.40px;top:257.00px;font-size:9.2px;color:#565960;letter-spacing:-0.107px">the wall and take turns sharing their</div>
<div class="t" style="left:331.40px;top:272.00px;font-size:9.2px;color:#565960;letter-spacing:-0.023px">concepts</div>
<div class="t" style="left:620.50px;top:53.00px;font-size:10.2px;color:#2e3033;letter-spacing:0.045px">Create an image</div>
<div class="t" style="left:610.00px;top:87.00px;font-size:8.9px;color:#4a4d52;letter-spacing:0.032px">Simple line art drawing of a team</div>
<div class="t" style="left:610.00px;top:98.00px;font-size:8.9px;color:#4a4d52;letter-spacing:0.070px">collaborating around a table</div>
<div class="t" style="left:610.00px;top:109.00px;font-size:8.9px;color:#4a4d52;letter-spacing:0.030px">surrounded by notebooks and sketches,</div>
<div class="t" style="left:610.00px;top:120.00px;font-size:8.9px;color:#4a4d52;letter-spacing:0.018px">joyful expressions. Subtle accent colors.</div>
<div class="t" style="left:615.40px;top:182.00px;font-size:7.6px;color:#444746;letter-spacing:0.117px">Square</div>
<div class="t" style="left:681.00px;top:182.00px;font-size:7.6px;color:#1f2a44;letter-spacing:0.097px;-webkit-text-stroke:0.2px #1f2a44">Wide</div>
<div class="t" style="left:745.70px;top:182.00px;font-size:7.6px;color:#444746;letter-spacing:-0.027px">Tall</div>
<div class="t" style="left:605.20px;top:208.00px;font-size:8.9px;color:#444746;letter-spacing:-0.011px">Add a style</div>
<div class="t" style="left:669.10px;top:241.00px;font-size:9.0px;color:#3f62dc;letter-spacing:-0.018px;-webkit-text-stroke:0.2px #3f62dc">View more</div>
<div class="t" style="left:614.60px;top:269.00px;font-size:7.6px;color:#5f6368;letter-spacing:-0.103px">Gemini for Workspace may display inaccurate</div>
<div class="t" style="left:611.90px;top:279.00px;font-size:7.6px;color:#5f6368;letter-spacing:-0.016px">information, including about people, so double-</div>
<div class="t" style="left:656.80px;top:289.00px;font-size:7.6px;color:#5f6368;letter-spacing:-0.135px">check its responses.</div>
<div class="t" style="left:671.50px;top:304.00px;font-size:7.6px;color:#3f62dc;letter-spacing:-0.174px;-webkit-text-stroke:0.2px #3f62dc">Learn more</div>
</body>
</html>
